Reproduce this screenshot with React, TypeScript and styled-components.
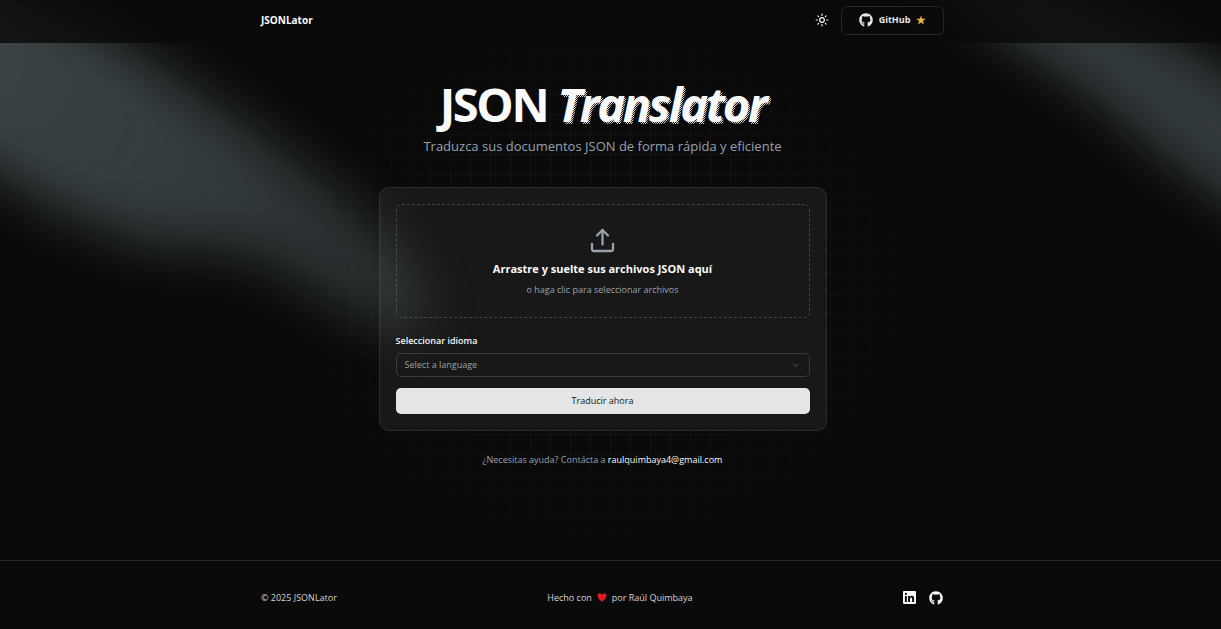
import React from "react";
import styled, { createGlobalStyle, css } from "styled-components";
import { ChevronDown, Sun } from "lucide-react";
import { FaGithub } from "react-icons/fa";

const GlobalStyle = createGlobalStyle`
  *, *::before, *::after { box-sizing: border-box; }
  html { background: #0a0a0a; }
  body {
    margin: 0;
    color: #fafafa;
    font-family: "Open Sans", "Noto Sans", sans-serif;
    font-size: 9px;
    line-height: 14px;
  }
  h1, h2, p { margin: 0; }
  a { color: inherit; text-decoration: none; }
`;

const Page = styled.div`
  position: relative;
  z-index: 0;
  display: flex;
  flex-direction: column;
  min-height: 100vh;
  overflow: hidden;
  background: #0a0a0a;
`;

const Beams = styled.svg`
  position: absolute;
  top: 0;
  width: 560px;
  height: 420px;
  z-index: 1;
  pointer-events: none;
  ${(p: { $side: "left" | "right" }) => (p.$side === "left" ? css`left: 0;` : css`right: 0;`)}
`;

const Grid = styled.div`
  position: absolute;
  inset: 0 16px 0 0;
  z-index: -1;
  pointer-events: none;
  background-image:
    linear-gradient(to right, rgba(255, 255, 255, 0.04) 1px, transparent 1px),
    linear-gradient(to bottom, rgba(255, 255, 255, 0.04) 1px, transparent 1px);
  background-size: 20px 20px;
  background-position: 10px 14px;
  mask-image: radial-gradient(330px 280px at 50% 284px, #000 55%, transparent 100%);
`;

const Container = styled.div`
  display: flex;
  align-items: center;
  justify-content: space-between;
  width: 100%;
  max-width: 683px;
  margin: 0 auto;
`;

const Header = styled.header`
  position: relative;
  z-index: 2;
  padding: 0 16px 0 0;
  background: rgba(10, 10, 10, 0.82);

  ${Container} { height: 43px; padding-bottom: 3px; }
`;

const Brand = styled.a`
  font-size: 10px;
  font-weight: 700;
`;

const Row = styled.div`
  display: flex;
  align-items: center;
  gap: ${(p: { $gap: number }) => p.$gap}px;
`;

const IconButton = styled.button`
  display: flex;
  padding: 0;
  border: 0;
  background: none;
  color: inherit;
`;

const GithubLink = styled.a`
  display: flex;
  align-items: center;
  justify-content: center;
  gap: 6px;
  width: 103px;
  height: 29px;
  border: 1px solid #262626;
  border-radius: 6px;
  background: #0a0a0a;
  color: #e8e8e8;
  font-weight: 700;
`;

const Main = styled.main`
  display: flex;
  flex: 1;
  flex-direction: column;
  align-items: center;
  padding: 33px 16px 24px 0;
`;

const Title = styled.h1`
  font-size: 47px;
  font-weight: 700;
  line-height: 56px;
  letter-spacing: -0.05em;
`;

const ShadowWord = styled.span`
  position: relative;
  z-index: 0;
  display: inline-block;
  font-style: italic;

  &::after {
    content: attr(data-text);
    position: absolute;
    top: 2px;
    left: 2px;
    z-index: -1;
    padding-right: 4px;
    background-image: repeating-conic-gradient(#d4d4d4 0 25%, transparent 0 50%);
    background-size: 2px 2px;
    background-clip: text;
    -webkit-background-clip: text;
    color: transparent;
  }
`;

const Lead = styled.p`
  margin-top: 4px;
  color: #99a1af;
  font-size: 13px;
  line-height: 20px;
`;

const Card = styled.form`
  width: 448px;
  max-width: 100%;
  margin-top: 31px;
  padding: 16px;
  border: 1px solid #2c2c2c;
  border-radius: 10px;
  background: #181818;
`;

const DropZone = styled.label`
  display: flex;
  flex-direction: column;
  align-items: center;
  height: 114px;
  padding-top: 23px;
  border: 1px dashed #3f434e;
  border-radius: 6px;

  input { position: absolute; width: 1px; height: 1px; opacity: 0; }
  svg { color: #99a1af; }
`;

const DropTitle = styled.span`
  margin-top: 6px;
  font-size: 11px;
  font-weight: 700;
  line-height: 18px;
`;

const Muted = styled.span`
  margin-top: 5px;
  color: #99a1af;
`;

const FieldLabel = styled.label`
  display: block;
  margin: 16px 0 5px;
  font-weight: 600;
`;

const SelectBox = styled.div`
  display: grid;
  align-items: center;

  select, svg { grid-area: 1 / 1; }
  svg { justify-self: end; margin-right: 10px; color: #707070; pointer-events: none; }
`;

const Select = styled.select`
  width: 100%;
  height: 24px;
  padding: 0 8px;
  border: 1px solid #3a3a3a;
  border-radius: 5px;
  appearance: none;
  background: transparent;
  color: #a1a1a1;
  font: inherit;
`;

const Submit = styled.button`
  display: block;
  width: 100%;
  height: 26px;
  margin-top: 11px;
  padding: 0;
  border: 0;
  border-radius: 5px;
  background: #e5e5e5;
  color: #171717;
  font: inherit;
`;

const Help = styled.p`
  margin-top: 22px;
  color: #99a1af;

  a { color: #fafafa; }
`;

const Footer = styled.footer`
  padding-right: 16px;
  border-top: 1px solid #262626;
  background: #0a0a0a;
  color: #d4d4d4;

  ${Container} { height: 68px; padding: 5px 1px 0 0; }
  a { display: flex; color: #fafafa; }
`;

const UploadIcon = () => (
  <svg width="26" height="26" viewBox="0 0 26 26" fill="none" stroke="currentColor" strokeWidth="2.300" strokeLinecap="round" strokeLinejoin="round" aria-hidden="true">
    <path d="M2 16v5a2 2 0 0 0 2 2h17a2 2 0 0 0 2-2v-5" />
    <path d="M7 7.500l5.500-5.500 5.500 5.500" />
    <path d="M12.500 2v14.500" />
  </svg>
);

const Star = () => (
  <svg width="10" height="10" viewBox="0 0 24 24" aria-hidden="true">
    <path fill="#e8b83c" d="M12 1l2.700 8.200H23.500l-7.100 5.200 2.700 8.400L12 17.700l-7.100 5.100 2.700-8.400L.5 9.200h8.800z" />
  </svg>
);

const LinkedIn = () => (
  <svg width="13" height="13" viewBox="0 0 24 24" fill="currentColor" aria-hidden="true">
    <path d="M20.447 20.452h-3.554v-5.569c0-1.328-.027-3.037-1.852-3.037-1.853 0-2.136 1.445-2.136 2.939v5.667H9.351V9h3.414v1.561h.046c.477-.9 1.637-1.850 3.370-1.850 3.601 0 4.267 2.370 4.267 5.455v6.286zM5.337 7.433a2.062 2.062 0 0 1-2.063-2.065 2.064 2.064 0 1 1 2.063 2.065zm1.782 13.019H3.555V9h3.564v11.452zM22.225 0H1.771C.792 0 0 .774 0 1.729v20.542C0 23.227.792 24 1.771 24h20.451C23.200 24 24 23.227 24 22.271V1.729C24 .774 23.200 0 22.222 0h.003z" />
  </svg>
);

const Heart = () => (
  <svg width="10" height="9" viewBox="0 0 20 18" aria-hidden="true">
    <path fill="#e11923" d="M10 17.500C6 14 1 10.500 1 5.500 1 1 7 -1 10 3.500 13 -1 19 1 19 5.500 19 10.500 14 14 10 17.500Z" />
    <path fill="#ff6b6b" d="M4 5c0-2 2-3 3-2-1 0-2 1-3 2z" />
  </svg>
);

export default function App() {
  return (
    <>
      <GlobalStyle />
      <Page>
        <Beams $side="left" viewBox="0 0 560 420" aria-hidden="true">
          <defs>
            <filter id="softLeft" x="-50%" y="-50%" width="200%" height="200%" colorInterpolationFilters="sRGB">
              <feGaussianBlur stdDeviation="26" />
            </filter>
            <linearGradient id="fadeLeft" gradientUnits="userSpaceOnUse" x1="0" y1="40" x2="420" y2="320">
              <stop offset="0" stopColor="#9bb4ba" stopOpacity="0.34" />
              <stop offset="0.5" stopColor="#9bb4ba" stopOpacity="0.28" />
              <stop offset="1" stopColor="#9bb4ba" stopOpacity="0.2" />
            </linearGradient>
          </defs>
          <path filter="url(#softLeft)" fill="url(#fadeLeft)" d="M-140-80L0-20L110 36L250 128L340 194L400 252L430 315L400 335L335 305L270 262L210 248L150 246L60 212L0 175L-140 90Z" />
        </Beams>
        <Beams $side="right" viewBox="0 0 560 420" aria-hidden="true">
          <defs>
            <filter id="softRight" x="-50%" y="-50%" width="200%" height="200%" colorInterpolationFilters="sRGB">
              <feGaussianBlur stdDeviation="23" />
            </filter>
          </defs>
          <path filter="url(#softRight)" fill="#9bb4ba" fillOpacity="0.28" d="M250-30L400-20L510 38L570 74L660 140L660 270L560 198L500 155L430 96L345 40Z" />
        </Beams>
        <Grid />

        <Header>
          <Container>
            <Brand href="#">JSONLator</Brand>
            <Row $gap={12}>
              <IconButton type="button" aria-label="Cambiar tema">
                <Sun size={14} />
              </IconButton>
              <GithubLink href="#">
                <FaGithub size={14} />
                GitHub
                <Star />
              </GithubLink>
            </Row>
          </Container>
        </Header>

        <Main>
          <Title>
            JSON <ShadowWord data-text="Translator">Translator</ShadowWord>
          </Title>
          <Lead>Traduzca sus documentos JSON de forma rápida y eficiente</Lead>

          <Card>
            <DropZone>
              <input type="file" accept="application/json" multiple />
              <UploadIcon />
              <DropTitle>Arrastre y suelte sus archivos JSON aquí</DropTitle>
              <Muted>o haga clic para seleccionar archivos</Muted>
            </DropZone>
            <FieldLabel htmlFor="language">Seleccionar idioma</FieldLabel>
            <SelectBox>
              <Select id="language" defaultValue="">
                <option value="">Select a language</option>
              </Select>
              <ChevronDown size={9} />
            </SelectBox>
            <Submit type="button">Traducir ahora</Submit>
          </Card>

          <Help>
            ¿Necesitas ayuda? Contácta a <a href="mailto:raulquimbaya4@gmail.com">raulquimbaya4@gmail.com</a>
          </Help>
        </Main>

        <Footer>
          <Container>
            <span>© 2025 JSONLator</span>
            <Row $gap={5}>
              <span>Hecho con</span>
              <Heart />
              <span>por Raúl Quimbaya</span>
            </Row>
            <Row $gap={13}>
              <a href="#" aria-label="LinkedIn"><LinkedIn /></a>
              <a href="#" aria-label="GitHub"><FaGithub size={14} /></a>
            </Row>
          </Container>
        </Footer>
      </Page>
    </>
  );
}
